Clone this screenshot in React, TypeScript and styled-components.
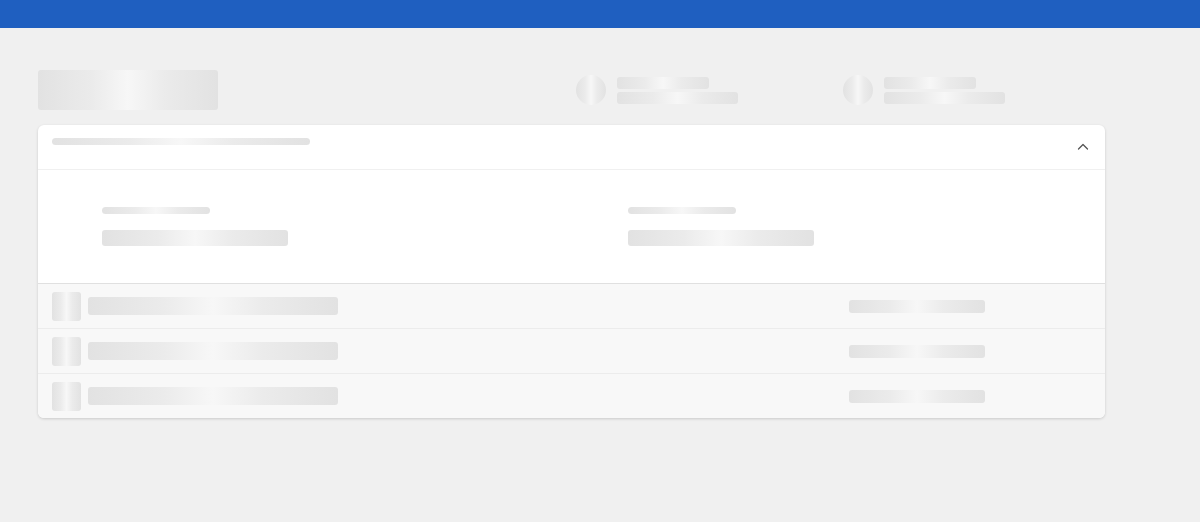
import styled, { createGlobalStyle } from "styled-components";

const GlobalStyle = createGlobalStyle`
  html, body {
    margin: 0;
    padding: 0;
    background: #f0f0f0;
    font-family: "Liberation Sans", Arial, sans-serif;
  }
`;

const shimmer = `
  background: linear-gradient(90deg, #e2e2e2 0%, #ebebeb 30%, #f7f7f7 50%, #ebebeb 70%, #e2e2e2 100%);
`;

const TopBar = styled.div`
  height: 28px;
  background: #1f5fc0;
`;

const Page = styled.main`
  padding: 42px 38px;
  width: 1067px;
`;

const PageHeader = styled.header`
  display: grid;
  grid-template-columns: 538px 267px 1fr;
  align-items: start;
  margin-bottom: 15px;
`;

const TitleBlock = styled.div`
  width: 180px;
  height: 40px;
  border-radius: 3px;
  ${shimmer}
`;

const Stat = styled.div`
  display: flex;
  align-items: center;
  gap: 11px;
  margin-top: 5px;
`;

const Circle = styled.div`
  width: 30px;
  height: 30px;
  border-radius: 50%;
  ${shimmer}
`;

const StatLines = styled.div`
  display: flex;
  flex-direction: column;
  gap: 3px;
`;

interface BarProps {
  w: number;
  h: number;
  round?: boolean;
}

const Bar = styled.div<BarProps>`
  width: ${(p) => p.w}px;
  height: ${(p) => p.h}px;
  border-radius: ${(p) => (p.round ? "999px" : "3px")};
  ${shimmer}
`;

const Card = styled.section`
  background: #fff;
  border-radius: 6px;
  box-shadow: 0 1px 3px rgba(0, 0, 0, 0.16);
  overflow: hidden;
`;

const CardHeader = styled.div`
  height: 44px;
  display: flex;
  justify-content: space-between;
  padding: 0 16px 0 14px;
  border-bottom: 1px solid #f0f0f0;
`;

const HeaderBar = styled(Bar)`
  margin-top: 13px;
`;

const Chevron = styled.svg`
  margin-top: 16px;
  width: 12px;
  height: 12px;
`;

const Summary = styled.div`
  display: grid;
  grid-template-columns: 526px 1fr;
  padding: 37px 64px;
  border-bottom: 1px solid #e0e0e0;
`;

const Field = styled.div`
  display: flex;
  flex-direction: column;
  gap: 16px;
`;

const Row = styled.div`
  height: 44px;
  display: flex;
  align-items: center;
  padding: 0 120px 0 14px;
  background: #f8f8f8;
  &:not(:last-child) {
    border-bottom: 1px solid #ececec;
  }
`;

const Thumb = styled.div`
  width: 29px;
  height: 29px;
  border-radius: 3px;
  ${shimmer}
`;

const RowName = styled(Bar)`
  margin-left: 7px;
`;

const RowValue = styled(Bar)`
  margin-left: auto;
`;

const StatItem = () => (
  <Stat>
    <Circle />
    <StatLines>
      <Bar w={92} h={12} />
      <Bar w={121} h={12} />
    </StatLines>
  </Stat>
);

const App = () => {
  return (
    <>
      <GlobalStyle />
      <TopBar />
      <Page>
        <PageHeader>
          <TitleBlock />
          <StatItem />
          <StatItem />
        </PageHeader>
        <Card>
          <CardHeader>
            <HeaderBar w={258} h={7} round />
            <Chevron viewBox="0 0 12 12" fill="none">
              <path d="M1.5 8 L6 3.5 L10.5 8" stroke="#555" strokeWidth="1.3" strokeLinecap="round" strokeLinejoin="round" />
            </Chevron>
          </CardHeader>
          <Summary>
            <Field>
              <Bar w={108} h={7} round />
              <Bar w={186} h={16} />
            </Field>
            <Field>
              <Bar w={108} h={7} round />
              <Bar w={186} h={16} />
            </Field>
          </Summary>
          {[0, 1, 2].map((i) => (
            <Row key={i}>
              <Thumb />
              <RowName w={250} h={18} />
              <RowValue w={136} h={13} />
            </Row>
          ))}
        </Card>
      </Page>
    </>
  );
};

export default App;
